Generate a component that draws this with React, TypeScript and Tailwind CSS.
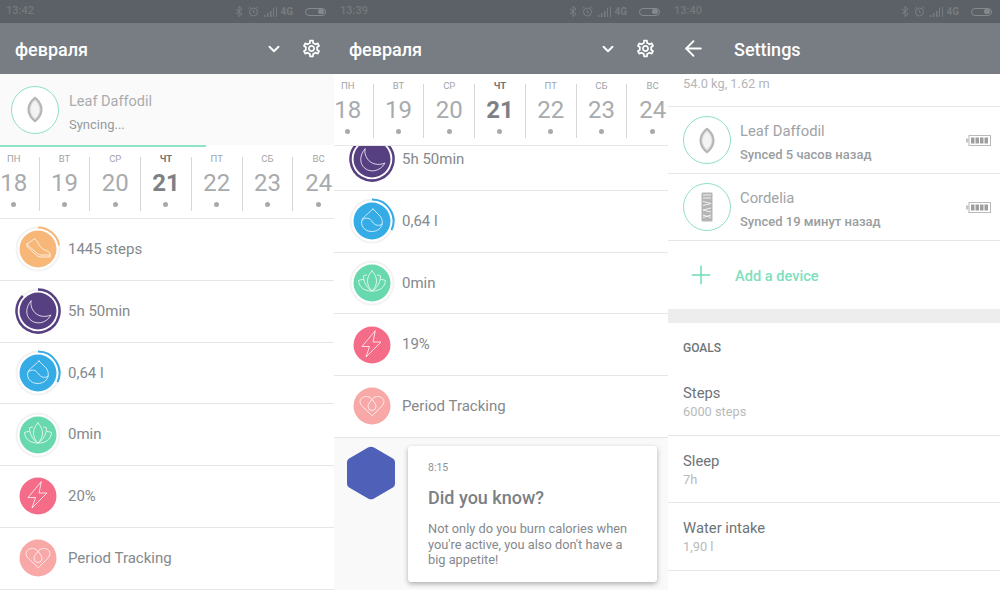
import React from 'react';
import { ArrowLeft, ChevronDown, Plus } from 'lucide-react';
import { MdOutlineSettings } from 'react-icons/md';

const days = [
  ['ПН', '18'],
  ['ВТ', '19'],
  ['СР', '20'],
  ['ЧТ', '21'],
  ['ПТ', '22'],
  ['СБ', '23'],
  ['ВС', '24'],
];

type Kind = 'steps' | 'sleep' | 'water' | 'calm' | 'energy' | 'period';

const fills: Record<Kind, string> = {
  steps: '#f6b778',
  sleep: '#574081',
  water: '#35ace6',
  calm: '#68d8ae',
  energy: '#f56c89',
  period: '#f9a8a8',
};

// arc on a circle around 23,23, angles clockwise from 12 o'clock
function arc(r: number, from: number, to: number) {
  const pt = (a: number) => {
    const t = ((a - 90) * Math.PI) / 180;
    return `${23 + r * Math.cos(t)} ${23 + r * Math.sin(t)}`;
  };
  return `M${pt(from)} A${r} ${r} 0 ${to - from > 180 ? 1 : 0} 1 ${pt(to)}`;
}

function Glyph({ kind }: { kind: Kind }) {
  const line = { fill: 'none', stroke: '#fff', strokeWidth: 0.9, strokeLinejoin: 'round' as const, strokeLinecap: 'round' as const, opacity: 0.85 };
  if (kind === 'steps')
    return (
      <g {...line}>
        <path d="M12 18L20 12.5L25 20C26 22 28 23 31 24.5L34 26C35 27 35 28 35 29H26C24.5 29 23.5 28.5 22.5 27.5Z" />
        <path d="M12 18V20.5L22.5 30C23.5 30.7 24.5 31 26 31H35V29" />
      </g>
    );
  if (kind === 'sleep')
    return (
      <g {...line}>
        <path d="M16 13C10.5 19 10.5 27 15 31.5C20.5 37 31 36 36 27C29 30 22 28 18.5 23C16 19.5 15.5 16 16 13Z" />
      </g>
    );
  if (kind === 'water')
    return (
      <g {...line}>
        <path d="M24 11L31 18C35.5 23 33.5 33.5 22.5 33.5C15 33.5 10.5 26.5 13.5 21C15 18.5 20 15 24 11Z" />
        <path d="M13 22C17 18.5 21 20 23.5 24C26 27.5 30 28.5 33.5 26" />
      </g>
    );
  if (kind === 'calm')
    return (
      <g {...line}>
        <path d="M23 11C26 14 27.5 17.5 27.5 21S26 28.5 23 31C20 28.5 18.5 24.5 18.5 21S20 14 23 11Z" />
        <path d="M17.5 15C16.5 15 15.5 15.3 14.5 15.8C14.5 17.8 14.8 19.8 15.5 21.8C16.5 24.8 19 28.8 23 31" />
        <path d="M28.5 15C29.5 15 30.5 15.3 31.5 15.8C31.5 17.8 31.2 19.8 30.5 21.8C29.5 24.8 27 28.8 23 31" />
        <path d="M14 19.5C12.5 19.5 11 19.8 9.5 20.5C10 25.5 13 31 23 31S36 25.5 36.5 20.5C35 19.8 33.5 19.5 32 19.5" />
      </g>
    );
  if (kind === 'energy')
    return (
      <g {...line}>
        <path d="M26 9L13 24.5H20.5L17 35L32 20H24.5Z" />
      </g>
    );
  return (
    <g {...line}>
      <path d="M23 32.5L13.5 23.5C10 20 10.5 16.5 13.5 14.5C17 12.5 21 13.5 23 16.5C25 13.5 29 12.5 32.5 14.5C35.5 16.5 36 20 32.5 23.5Z" />
      <path d="M23 16.5C25 19 27 21 27 23.5A4 4 0 0 1 19 23.5C19 21 21 19 23 16.5Z" />
    </g>
  );
}

function StatIcon({ kind, progress }: { kind: Kind; progress?: number }) {
  const thick = kind === 'sleep' ? 2.5 : 2;
  return (
    <svg width="46" height="46" viewBox="0 0 46 46" className="shrink-0">
      {progress !== undefined && <circle cx="23" cy="23" r="21.5" fill="none" stroke="#f3f3f3" strokeWidth="2" />}
      {progress !== undefined && progress > 0 && (
        <path d={arc(21.5, 0, progress)} fill="none" stroke={fills[kind]} strokeWidth={thick} />
      )}
      <circle cx="23" cy="23" r="18.5" fill={fills[kind]} />
      <Glyph kind={kind} />
    </svg>
  );
}

function StatRow({ kind, label, progress }: { kind: Kind; label: string; progress?: number }) {
  return (
    <div className="flex h-[61.75px] items-center gap-[7px] border-b border-[#e6e6e6] bg-white pl-[15px]">
      <StatIcon kind={kind} progress={progress} />
      <span className="text-[15px] text-[#84898d]">{label}</span>
    </div>
  );
}

function SignalBars() {
  return (
    <svg width="13" height="10" viewBox="0 0 13 10">
      <path d="M0 8h1.5v2H0zM3 6h1.5v4H3zM6 4h1.5v6H6zM9 1h1v9H9zM12 0h1v10h-1z" fill="#777c80" />
    </svg>
  );
}

function StatusBar({ time }: { time: string }) {
  return (
    <div className="flex h-[23px] items-center justify-between bg-[#5b6166] pl-[6px] pr-[8px]">
      <span className="text-[11px] font-medium text-[#74797d]">{time}</span>
      <div className="flex items-center gap-[3px]">
        <svg width="8" height="11" viewBox="0 0 8 11" fill="none" stroke="#7b8084" strokeWidth="1">
          <path d="M1 3l6 5-3 2.5v-10l3 2.5-6 5" />
        </svg>
        <svg width="11" height="11" viewBox="0 0 11 11" fill="none" stroke="#7b8084" strokeWidth="1" className="mx-[2px]">
          <circle cx="5.5" cy="6" r="4" />
          <path d="M5.5 4v2.2l1.5 1M.8 2.5L2.5.8M10.2 2.5L8.5.8" />
        </svg>
        <SignalBars />
        <span className="text-[10px] font-bold text-[#777c80]">4G</span>
        <div className="ml-[9px] flex h-[8px] w-[21px] items-center justify-end rounded-full border border-[#85898d] pr-[1px]">
          <div className="h-[5px] w-[6px] rounded-[2px] bg-[#85898d]" />
        </div>
      </div>
    </div>
  );
}

function MonthBar({ time }: { time: string }) {
  return (
    <div className="relative z-10">
      <StatusBar time={time} />
      <div className="flex h-[51px] items-center bg-[#777d83] pl-[15px] pr-[12px]">
        <span className="flex-1 pt-[2px] text-[18px] font-medium text-white">февраля</span>
        <ChevronDown size={18} strokeWidth={2.5} className="mr-[18px] text-white" />
        <MdOutlineSettings size={21} className="text-white" />
      </div>
    </div>
  );
}

function Calendar() {
  return (
    <div className="relative z-10 h-[72px] overflow-hidden border-b border-[#e6e6e6] bg-white">
      <div className="ml-[-11px] grid w-[355px] grid-cols-7 pt-[10px]">
        {days.map(([name, num], i) => {
          const active = num === '21';
          return (
            <div
              key={num}
              className={`flex h-[54px] flex-col items-center ${i < 6 ? 'border-r border-[#d6d6d6]' : ''}`}
            >
              <span className={`mt-[-4px] text-[9.5px] leading-[12px] ${active ? 'font-bold text-[#6f7478]' : 'text-[#a2a5a8]'}`}>
                {name}
              </span>
              <span className={`mt-[4px] text-[24px] leading-[28px] ${active ? 'font-bold text-[#7d8185]' : 'text-[#a8abae]'}`}>
                {num}
              </span>
              <span className="mt-[5px] h-[5px] w-[5px] rounded-full bg-[#a9a9a9]" />
            </div>
          );
        })}
      </div>
    </div>
  );
}

function DeviceBadge({ kind }: { kind: 'leaf' | 'band' }) {
  return (
    <div className="flex h-[48px] w-[48px] shrink-0 items-center justify-center rounded-full border border-[#8fe0c5] bg-white">
      {kind === 'leaf' ? (
        <svg width="16" height="27" viewBox="0 0 16 27">
          <path d="M8 0.5C12 3.5 15.5 8 15.5 13.5S12 23.5 8 26.5C4 23.5 0.5 19 0.5 13.5S4 3.5 8 0.5Z" fill="#b4b4b4" />
          <path d="M8 3C11 5.5 13.5 9 13.5 13.5S11 21.5 8 24C5 21.5 2.5 18 2.5 13.5S5 5.5 8 3Z" fill="#d6d6d6" />
          <path d="M8 4.5C10.5 6.5 12.5 10 12.5 13.5S10.5 20.5 8 22.5C5.5 20.5 3.5 17 3.5 13.5S5.5 6.5 8 4.5Z" fill="#f3f3f4" />
        </svg>
      ) : (
        <svg width="12" height="30" viewBox="0 0 12 30">
          <rect x="0.5" y="0.5" width="11" height="29" rx="1" fill="#b5b5b5" />
          <path d="M2 3h8M2 6h8M2 9.5l8 2-8 2M10 16l-8 2 8 2M2 23l8 2.5M10 23l-8 2.5" stroke="#f2f2f2" strokeWidth="1" fill="none" />
        </svg>
      )}
    </div>
  );
}

function Battery() {
  return (
    <svg width="25" height="11" viewBox="0 0 25 11" className="shrink-0">
      <rect x="0" y="3.5" width="2.5" height="4" fill="#c4c4c4" />
      <rect x="3" y="0.5" width="21.5" height="10" fill="#fff" stroke="#b9b9b9" />
      <path d="M5 2.5h3.500v6H5zM9.500 2.500H13v6H9.500zM14 2.500h3.500v6H14zM18.500 2.500H22v6h-3.500z" fill="#9e9e9e" />
    </svg>
  );
}

function DeviceRow({ kind, name, synced }: { kind: 'leaf' | 'band'; name: string; synced: string }) {
  return (
    <div className="flex h-[67px] items-center border-b border-[#e6e6e6] pl-[15px] pr-[9px]">
      <DeviceBadge kind={kind} />
      <div className="ml-[9px] flex-1 pt-[5px]">
        <div className="text-[14.8px] leading-[20px] text-[#a0a3a5]">{name}</div>
        <div className="mt-[5px] text-[13px] font-medium leading-[18px] text-[#9a9da0]">{synced}</div>
      </div>
      <Battery />
    </div>
  );
}

function GoalRow({ title, value }: { title: string; value: string }) {
  return (
    <div className="flex h-[67.5px] flex-col justify-center border-b border-[#e6e6e6] pl-[15px] pt-[2px]">
      <div className="text-[14.8px] leading-[20px] text-[#6e7377]">{title}</div>
      <div className="text-[12.8px] leading-[18px] text-[#b8babb]">{value}</div>
    </div>
  );
}

function DashboardScreen() {
  return (
    <section className="h-[590px] w-[334px] shrink-0 overflow-hidden bg-white">
      <MonthBar time="13:42" />
      <div className="flex h-[71px] items-center bg-[#fafafa] pl-[11px]">
        <DeviceBadge kind="leaf" />
        <div className="ml-[10px] pt-[7px]">
          <div className="text-[14.5px] leading-[20px] text-[#a9abad]">Leaf Daffodil</div>
          <div className="mt-[4px] text-[13px] leading-[18px] text-[#979a9c]">Syncing...</div>
        </div>
      </div>
      <div className="h-[2px] bg-white">
        <div className="h-full w-[206px] bg-[#8fe3c6]" />
      </div>
      <Calendar />
      <StatRow kind="steps" label="1445 steps" progress={80} />
      <StatRow kind="sleep" label="5h 50min" progress={315} />
      <StatRow kind="water" label="0,64 l" progress={115} />
      <StatRow kind="calm" label="0min" progress={0} />
      <StatRow kind="energy" label="20%" />
      <StatRow kind="period" label="Period Tracking" />
    </section>
  );
}

function TimelineScreen() {
  return (
    <section className="h-[590px] w-[334px] shrink-0 overflow-hidden bg-[#f9f9f9]">
      <MonthBar time="13:39" />
      <Calendar />
      <div className="mt-[-17px]">
        <StatRow kind="sleep" label="5h 50min" progress={315} />
        <StatRow kind="water" label="0,64 l" progress={115} />
        <StatRow kind="calm" label="0min" progress={0} />
        <StatRow kind="energy" label="19%" />
        <StatRow kind="period" label="Period Tracking" />
      </div>
      <div className="flex items-start pl-[13px] pt-[8.5px]">
        <svg width="48" height="54" viewBox="0 0 48 54" className="shrink-0">
          <path
            d="M21 1.5a6 6 0 0 1 6 0l18 10.5a5 5 0 0 1 3 4.5v21a5 5 0 0 1-3 4.5L27 52.5a6 6 0 0 1-6 0L3 42a5 5 0 0 1-3-4.5v-21A5 5 0 0 1 3 12z"
            fill="#4f60b8"
          />
        </svg>
        <div className="ml-[13px] h-[136px] w-[249px] rounded-[3px] bg-white pl-[20px] pr-[16px] pt-[15px] shadow-[0_2px_5px_rgba(0,0,0,0.3)]">
          <div className="text-[10.5px] leading-[14px] text-[#8e9296]">8:15</div>
          <div className="mt-[11px] text-[18px] font-medium leading-[24px] text-[#7b8085]">Did you know?</div>
          <p className="mt-[11px] text-[12.8px] leading-[15.5px] text-[#85898d]">
            Not only do you burn calories when you're active, you also don't have a big appetite!
          </p>
        </div>
      </div>
    </section>
  );
}

function SettingsScreen() {
  return (
    <section className="h-[590px] flex-1 overflow-hidden bg-white">
      <StatusBar time="13:40" />
      <div className="flex h-[51px] items-center bg-[#777d83] pl-[13px]">
        <ArrowLeft size={25} strokeWidth={1.8} className="text-white" />
        <span className="ml-[28px] pt-[2px] text-[18px] font-medium text-white">Settings</span>
      </div>
      <div className="h-[33px] border-b border-[#e6e6e6] pl-[15px] pt-[1px] text-[12.8px] leading-[18px] text-[#b4b6b8]">
        54.0 kg, 1.62 m
      </div>
      <DeviceRow kind="leaf" name="Leaf Daffodil" synced="Synced 5 часов назад" />
      <DeviceRow kind="band" name="Cordelia" synced="Synced 19 минут назад" />
      <div className="flex h-[68px] items-center pl-[18px]">
        <Plus size={30} strokeWidth={1.2} className="text-[#6fdcb5]" />
        <span className="ml-[19px] pt-[3px] text-[14.6px] font-medium text-[#7de0bd]">Add a device</span>
      </div>
      <div className="h-[14px] bg-[#ededed]" />
      <div className="flex h-[45px] items-center pl-[15px] pt-[5px] text-[12px] font-medium text-[#6f7478]">GOALS</div>
      <GoalRow title="Steps" value="6000 steps" />
      <GoalRow title="Sleep" value="7h" />
      <GoalRow title="Water intake" value="1,90 l" />
    </section>
  );
}

export default function App() {
  return (
    <div className="flex h-[590px] w-[1000px] overflow-hidden bg-white font-['Roboto',sans-serif]">
      <DashboardScreen />
      <TimelineScreen />
      <SettingsScreen />
    </div>
  );
}
